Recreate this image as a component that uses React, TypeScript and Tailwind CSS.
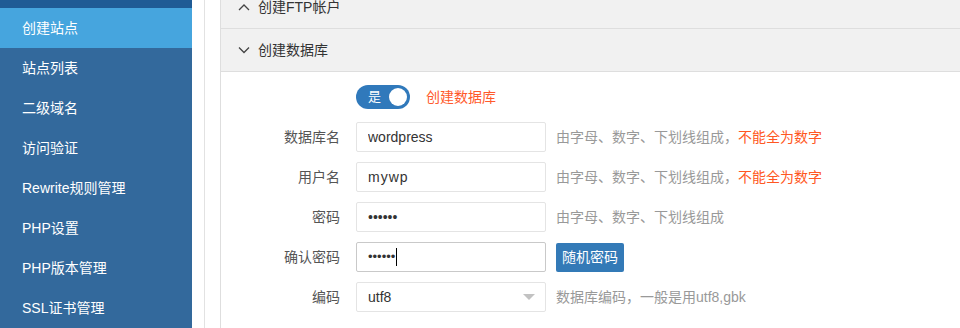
import React from 'react';

const menuItems = ['创建站点', '站点列表', '二级域名', '访问验证', 'Rewrite规则管理', 'PHP设置', 'PHP版本管理', 'SSL证书管理'];

const font = { fontFamily: '"Liberation Sans", Arial, "Noto Sans CJK SC", sans-serif' };

const Chevron: React.FC<{ up?: boolean }> = ({ up }) => (
  <svg width="12" height="8" viewBox="0 0 12 8" className="shrink-0">
    <path d={up ? 'M1 7 L6 2 L11 7' : 'M1 1.5 L6 6.5 L11 1.5'} fill="none" stroke="#444" strokeWidth="1.3" />
  </svg>
);

interface RowProps {
  label: string;
  children: React.ReactNode;
  extra?: React.ReactNode;
}

const FormRow: React.FC<RowProps> = ({ label, children, extra }) => (
  <div className="flex items-center h-[40px]">
    <label className="w-[119px] text-right text-[14px] text-[#555]">{label}</label>
    <div className="ml-[16px] w-[190px]">{children}</div>
    {extra && <div className="ml-[10px] text-[14px] text-[#999]">{extra}</div>}
  </div>
);

const inputClass = 'w-full h-[30px] px-[11px] border border-[#e4e4e4] rounded-[2px] text-[14px] text-[#333] outline-none bg-white';

const warnHint = (
  <>
    由字母、数字、下划线组成，<span className="text-[#ff5722]">不能全为数字</span>
  </>
);

export default function App() {
  return (
    <div className="flex h-[328px] w-[960px] overflow-hidden bg-white" style={font}>
      {/* Sidebar */}
      <div className="w-[192px] shrink-0 bg-[#33699c]">
        <div className="h-[8px] bg-[#1f5b95]" />
        {menuItems.map((item, i) => (
          <div
            key={item}
            className={`h-[40px] flex items-center pl-[22px] text-[14px] text-white ${i === 0 ? 'bg-[#46a5de]' : ''}`}
          >
            {item}
          </div>
        ))}
      </div>

      <div className="w-[12px] shrink-0" />
      <div className="w-[16px] shrink-0 border-l border-[#e2e2e2]" />

      {/* Main panel */}
      <div className="flex-1 border-l border-[#dedede] -mt-[14px]">
        <div className="h-[43px] flex items-center gap-[8px] pl-[17px] bg-[#f1f1f1] border-b border-[#dedede] text-[14px] text-[#333]">
          <Chevron up />
          <span>创建FTP帐户</span>
        </div>
        <div className="h-[43px] flex items-center gap-[8px] pl-[17px] bg-[#f1f1f1] border-b border-[#dedede] text-[14px] text-[#333]">
          <Chevron />
          <span>创建数据库</span>
        </div>

        <div className="pt-[13px]">
          <div className="flex items-center h-[24px] mb-[8px]">
            <div className="ml-[135px] w-[54px] h-[24px] rounded-full bg-[#3079bb] flex items-center justify-between pl-[12px] pr-[3px]">
              <span className="text-white text-[13px]">是</span>
              <span className="w-[18px] h-[18px] rounded-full bg-white" />
            </div>
            <span className="ml-[16px] text-[14px] text-[#ff5a2b]">创建数据库</span>
          </div>

          <FormRow label="数据库名" extra={warnHint}>
            <input className={inputClass} defaultValue="wordpress" />
          </FormRow>
          <FormRow label="用户名" extra={warnHint}>
            <input className={inputClass} defaultValue="mywp" style={{ letterSpacing: '1px' }} />
          </FormRow>
          <FormRow label="密码" extra="由字母、数字、下划线组成">
            <input type="password" className={inputClass} defaultValue="123456" />
          </FormRow>
          <FormRow
            label="确认密码"
            extra={
              <button className="h-[29px] w-[68px] rounded-[2px] bg-[#337ab7] text-white text-[14px]">
                随机密码
              </button>
            }
          >
            <div className="flex items-center w-full h-[30px] px-[11px] border border-[#c9c9c9] rounded-[2px]">
              <span className="text-[13px] text-[#333]">••••••</span>
              <span className="ml-[1px] w-px h-[18px] bg-black" />
            </div>
          </FormRow>
          <FormRow label="编码" extra="数据库编码，一般是用utf8,gbk">
            <div className="relative">
              <div className={`${inputClass} flex items-center`}>utf8</div>
              <span className="absolute right-[11px] top-[12px] w-0 h-0 border-l-[6px] border-r-[6px] border-t-[6px] border-l-transparent border-r-transparent border-t-[#c2c2c2]" />
            </div>
          </FormRow>
        </div>
      </div>
    </div>
  );
}
